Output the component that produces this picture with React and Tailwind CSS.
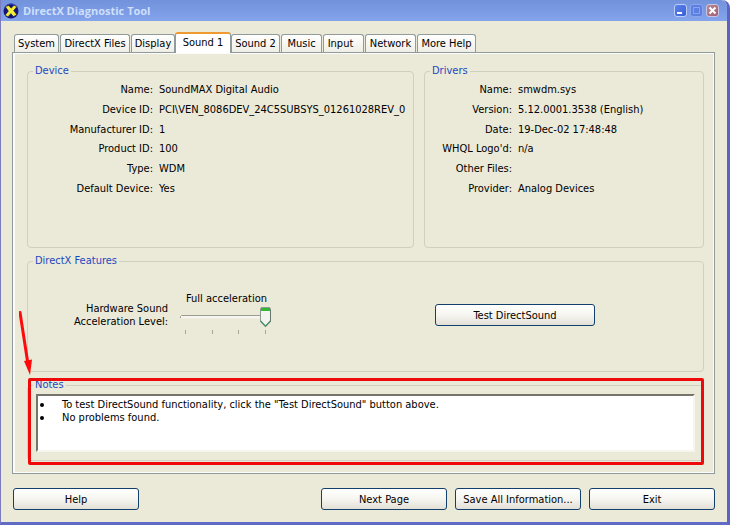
import { useState } from "react";

const tabs = [
  { name: "System", width: "w-[45px]" },
  { name: "DirectX Files", width: "w-[70px]" },
  { name: "Display", width: "w-[44px]" },
  { name: "Sound 1", width: "w-[56px]" },
  { name: "Sound 2", width: "w-[49px]" },
  { name: "Music", width: "w-[41px]" },
  { name: "Input", width: "w-[41px] pr-1.5" },
  { name: "Network", width: "w-[51px]" },
  { name: "More Help", width: "w-[59px]" },
];

const deviceInfo = [
  ["Name:", "SoundMAX Digital Audio"],
  ["Device ID:", "PCI\\VEN_8086DEV_24C5SUBSYS_01261028REV_0"],
  ["Manufacturer ID:", "1"],
  ["Product ID:", "100"],
  ["Type:", "WDM"],
  ["Default Device:", "Yes"],
];

const driverInfo = [
  ["Name:", "smwdm.sys"],
  ["Version:", "5.12.0001.3538 (English)"],
  ["Date:", "19-Dec-02 17:48:48"],
  ["WHQL Logo'd:", "n/a"],
  ["Other Files:", ""],
  ["Provider:", "Analog Devices"],
];

const notes = [
  'To test DirectSound functionality, click the "Test DirectSound" button above.',
  "No problems found.",
];

const DirectXIcon = () => (
  <svg viewBox="0 0 16 16" className="size-4 shrink-0" aria-hidden="true">
    <circle cx="8" cy="8" r="7.5" fill="#14147c" />
    <path d="M1.500 5.500C3 2 6 1 8 1c3 0 5.500 1.500 6.500 4" fill="none" stroke="#3d4fc4" strokeWidth="1" />
    <path
      d="M2.300 3.600 5.800 2.600 8.100 5.200 11 2.300 13.800 3.700 10.600 7.600 13.800 11.700 10.400 13.500 7.900 10.600 5 13.700 2.200 12.200 5.400 8.100Z"
      fill="#f4ee3c"
      stroke="#1a1a20"
      strokeWidth="0.5"
    />
  </svg>
);

const TitleBar = () => (
  <header className="h-[21px] flex items-center justify-between pl-0.5 pr-2 rounded-tr-md bg-linear-to-b from-[#7292dc] via-[#7a9be4] to-[#84a5ec]">
    <div className="flex items-center gap-1">
      <DirectXIcon />
      <h1 className="text-[11px] font-bold text-[#cfdffa] leading-4 font-['Open_Sans',sans-serif]">
        DirectX Diagnostic Tool
      </h1>
    </div>
    <div className="flex gap-[3px]">
      <button
        type="button"
        aria-label="Minimize"
        className="size-[13px] rounded-[3px] border border-[#b9cdf8] bg-linear-to-br from-[#5c82ea] to-[#3a5fd6]"
      >
        <svg viewBox="0 0 11 11" className="size-[11px]">
          <rect x="2" y="7" width="5" height="2" fill="#fff" />
        </svg>
      </button>
      <button
        type="button"
        aria-label="Maximize"
        disabled
        className="size-[13px] rounded-[3px] border border-[#8ba5ee] bg-[#5d7fe0]"
      >
        <svg viewBox="0 0 11 11" className="size-[11px]">
          <rect x="2.5" y="2.5" width="6" height="6" fill="none" stroke="#87a3f0" />
        </svg>
      </button>
      <button
        type="button"
        aria-label="Close"
        className="size-[13px] rounded-[3px] border border-[#c9c4e2] bg-linear-to-br from-[#b98a95] to-[#a05f70]"
      >
        <svg viewBox="0 0 11 11" className="size-[11px]">
          <path d="M2.500 2.500 8.500 8.500M8.500 2.500 2.500 8.500" stroke="#fff" strokeWidth="2" />
        </svg>
      </button>
    </div>
  </header>
);

const Group = ({ title, className = "", children }) => (
  <fieldset className={`border border-[#d0d0bf] rounded-[4px] ${className}`}>
    <legend className="ml-[5px] px-0.5 leading-[14px] text-[#1c48c0]">{title}</legend>
    {children}
  </fieldset>
);

const InfoList = ({ rows, columns }) => (
  <dl className="grid grid-rows-6 h-[118px] mt-0.5">
    {rows.map(([label, value]) => (
      <div key={label} className={`grid ${columns} gap-x-1.5 items-center whitespace-nowrap`}>
        <dt className="text-right">{label}</dt>
        <dd>{value}</dd>
      </div>
    ))}
  </dl>
);

const XpButton = ({ className = "", children }) => (
  <button
    type="button"
    className={`h-[22px] rounded-[3px] border border-[#123f6b] bg-linear-to-b from-white via-[#f6f5f0] to-[#e2e0d6] text-center ${className}`}
  >
    {children}
  </button>
);

const AccelerationSlider = () => {
  const [level, setLevel] = useState(3);
  const thumb = 80 + (level - 3) * 27;

  return (
    <div className="relative w-[92px] h-[30px]">
      <svg viewBox="0 0 92 30" className="w-[92px] h-[30px]" aria-hidden="true">
        <rect x="0.5" y="8.5" width="90" height="3" rx="1" fill="#f5f4ee" />
        <path d="M0.500 11V9.500L1.500 8.500H90" fill="none" stroke="#9b9d90" />
        <path d="M5.500 23v4M32.500 23v4M58.500 23v4M85.500 23v4" stroke="#a5a594" />
        <g transform={`translate(${thumb} 0)`}>
          <path d="M0.500 2Q0.500 0.500 2 0.500H9Q10.500 0.500 10.500 2V14.500L5.500 19.500 0.500 14.500Z" fill="#f3f3ef" stroke="#8c9a94" />
          <path d="M1 1H10V4H1Z" fill="#35b733" />
          <path d="M0.500 14 5.500 19.200 10.500 14" fill="none" stroke="#4a8f6c" strokeWidth="1.5" />
          <path d="M10.500 3V14.500" stroke="#66776f" />
        </g>
      </svg>
      <input
        id="acceleration"
        type="range"
        min="0"
        max="3"
        value={level}
        onChange={(e) => setLevel(Number(e.target.value))}
        className="absolute inset-0 w-full h-5 opacity-0"
      />
    </div>
  );
};

export default function App() {
  const [active, setActive] = useState("Sound 1");

  return (
    <div className="min-h-screen flex flex-col pb-px bg-white text-[11px] leading-[13px] text-black font-['DejaVu_Sans_Condensed','DejaVu_Sans',sans-serif]">
      <div className="grow flex flex-col rounded-tr-lg border-l border-l-[#7d7bc0] border-r-3 border-r-[#5d62c4] border-b-3 border-b-[#5f6bc4] bg-[#ebe9d8]">
        <TitleBar />
        <main className="grow flex flex-col pl-[11px] pr-3 pt-[11px]">
          <div role="tablist" className="flex items-end pl-0.5 gap-px">
            {tabs.map(({ name, width }) => (
              <button
                key={name}
                type="button"
                role="tab"
                aria-selected={name === active}
                onClick={() => setActive(name)}
                className={`${width} whitespace-nowrap rounded-t-[3px] border border-b-0 border-[#919b9c] ${
                  name === active
                    ? "h-[21px] -mb-px -mx-px pb-0.5 relative border-t-2 border-t-[#ee9a30] bg-white"
                    : "h-[18px] bg-linear-to-b from-white to-[#efeee6]"
                }`}
              >
                {name}
              </button>
            ))}
          </div>

          <section className="flex flex-col gap-1.5 border border-[#919b9c] pl-3.5 pr-2.5 pt-[11px] pb-3 shadow-[inset_2px_1px_0_#fcfcfa,inset_-1px_-1px_0_#fcfcfa]">
            <div className="grid grid-cols-[387fr_280fr] gap-2.5">
              <Group title="Device" className="min-h-[184px]">
                <InfoList rows={deviceInfo} columns="grid-cols-[125px_1fr]" />
              </Group>
              <Group title="Drivers">
                <InfoList rows={driverInfo} columns="grid-cols-[87px_1fr]" />
              </Group>
            </div>

            <Group title="DirectX Features" className="min-h-[118px]">
              <div className="flex pl-[46px] pt-6">
                <label htmlFor="acceleration" className="w-[94px] pt-2.5 text-right whitespace-nowrap">
                  Hardware Sound
                  <br />
                  Acceleration Level:
                </label>
                <div className="ml-3">
                  <p className="pl-1.5 pb-0.5 whitespace-nowrap">Full acceleration</p>
                  <AccelerationSlider />
                </div>
                <XpButton className="ml-auto mr-[108px] mt-3 w-[160px]">Test DirectSound</XpButton>
              </div>
            </Group>

            <div className="relative">
              <Group title="Notes" className="pb-2">
                <ul className="mx-2 mt-0.5 h-[58px] border-2 border-t-[#77756b] border-l-[#77756b] border-r-[#f6f5ee] border-b-[#f6f5ee] bg-white pt-0.5">
                  {notes.map((note) => (
                    <li key={note} className="flex items-center gap-[18px] pl-0.5">
                      <span className="size-1 rounded-full bg-black" />
                      {note}
                    </li>
                  ))}
                </ul>
              </Group>
              <div className="absolute left-px right-0 top-0 -bottom-1 border-3 border-[#ee0a0a] rounded-xs pointer-events-none" />
              <svg viewBox="0 0 16 66" className="absolute -left-2 -top-[67px] w-4 h-[66px] pointer-events-none" aria-hidden="true">
                <path d="M1 1.500 8.500 50" stroke="#ff0a0a" strokeWidth="3" strokeLinecap="round" fill="none" />
                <path d="M5 50 13 48.500 11 64Z" fill="#ff0a0a" />
              </svg>
            </div>
          </section>

          <footer className="flex gap-2 pl-px pt-3.5 pb-3">
            <XpButton className="w-[126px] mr-auto">Help</XpButton>
            <XpButton className="w-[126px]">Next Page</XpButton>
            <XpButton className="w-[126px]">Save All Information...</XpButton>
            <XpButton className="w-[126px]">Exit</XpButton>
          </footer>
        </main>
      </div>
    </div>
  );
}
